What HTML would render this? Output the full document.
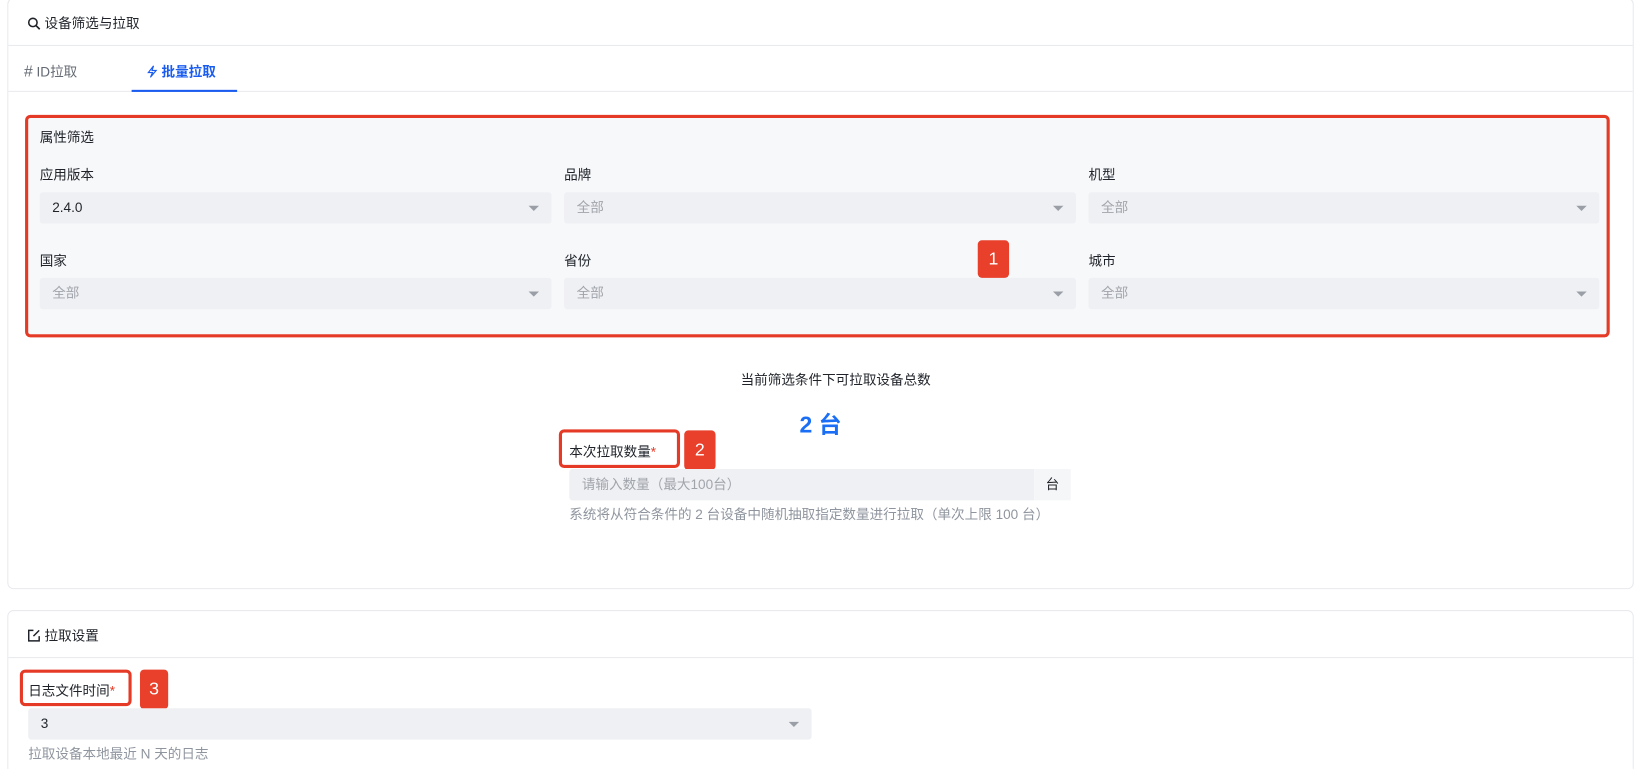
<!DOCTYPE html>
<html style="width:1636px;height:769px;overflow:hidden"><head><meta charset="utf-8"><style>
*{box-sizing:border-box;margin:0;padding:0}
body{width:1636px;height:769px;background:#fff;font-family:"Liberation Sans","Noto Sans CJK SC",sans-serif;font-size:13px;color:#1f2329;position:relative;overflow:hidden}
#w{position:absolute;left:0;top:0;width:1566px;height:736px;overflow:hidden;transform:scale(1.0446);transform-origin:0 0}
.a{position:absolute}
.card{position:absolute;left:7px;width:1557px;border:1px solid #e8eaee;border-radius:6px;background:#fff}
.sel{position:absolute;height:30px;background:#eff0f3;border-radius:3px;padding-left:12px;line-height:30px;font-size:13px;color:#a0a4ab}
.sel.d:after{content:"";position:absolute;right:12px;top:13px;border-left:5px solid transparent;border-right:5px solid transparent;border-top:5px solid #9a9ea6}
.lbl{position:absolute;font-size:13px;color:#1f2329}
.badge{position:absolute;background:#e8402a;color:#fff;border-radius:4px;text-align:center;font-size:17px}
.rb{position:absolute;border:3px solid #e53a26;border-radius:5px}
</style></head><body><div id="w">
<div class="card" style="top:-2px;height:566px"></div>
<div class="a" style="left:26px;top:12px;font-size:13px"><svg width="13" height="13" viewBox="0 0 13 13" style="vertical-align:-2px"><circle cx="5.5" cy="5.5" r="4" fill="none" stroke="#1f2329" stroke-width="1.5"/><path d="M8.5 8.5L12 12" stroke="#1f2329" stroke-width="1.6"/></svg> 设备筛选与拉取</div>
<div class="a" style="left:8px;top:43px;width:1555px;height:1px;background:#e8eaee"></div>
<div class="a" style="left:23px;top:58px;color:#646a73"><span style="font-size:15px">#</span> ID拉取</div>
<div class="a" style="left:140px;top:58px;color:#1a5cf0;font-weight:bold"><svg width="11" height="13" viewBox="0 0 11 13" style="vertical-align:-2px"><path d="M7 1L2 7.5H6L4 12L9.5 5.5H5.5L7 1Z" fill="none" stroke="#1a5cf0" stroke-width="1.1"/></svg> 批量拉取</div>
<div class="a" style="left:8px;top:87px;width:1555px;height:1px;background:#e8eaee"></div>
<div class="a" style="left:126px;top:86px;width:101px;height:2px;background:#1a5cf0"></div>
<div class="a" style="left:24px;top:110px;width:1517px;height:213px;background:#f7f8fa;border:3px solid #e53a26;border-radius:5px"></div>
<div class="lbl" style="left:38px;top:121px">属性筛选</div>
<div class="lbl" style="left:38px;top:157px">应用版本</div>
<div class="lbl" style="left:540px;top:157px">品牌</div>
<div class="lbl" style="left:1042px;top:157px">机型</div>
<div class="sel d" style="left:38px;top:184px;width:490px;color:#1f2329">2.4.0</div>
<div class="sel d" style="left:540px;top:184px;width:490px">全部</div>
<div class="sel d" style="left:1042px;top:184px;width:489px">全部</div>
<div class="lbl" style="left:38px;top:239px">国家</div>
<div class="lbl" style="left:540px;top:239px">省份</div>
<div class="lbl" style="left:1042px;top:239px">城市</div>
<div class="sel d" style="left:38px;top:266px;width:490px">全部</div>
<div class="sel d" style="left:540px;top:266px;width:490px">全部</div>
<div class="sel d" style="left:1042px;top:266px;width:489px">全部</div>
<div class="badge" style="left:936px;top:230px;width:30px;height:36px;line-height:36px">1</div>
<div class="a" style="left:0;width:1600px;top:353px;text-align:center;font-size:13px;color:#1f2329">当前筛选条件下可拉取设备总数</div>
<div class="a" style="left:0;width:1571px;top:389px;text-align:center;font-size:22px;font-weight:bold;color:#1a6ef5">2 台</div>
<div class="rb" style="left:535px;top:411px;width:116px;height:37px"></div>
<div class="lbl" style="left:545px;top:422px">本次拉取数量<span style="color:#e53a26">*</span></div>
<div class="badge" style="left:655px;top:412px;width:30px;height:38px;line-height:38px">2</div>
<div class="sel" style="left:545px;top:449px;width:445px;border-radius:3px 0 0 3px">请输入数量（最大100台）</div>
<div class="a" style="left:990px;top:449px;width:35px;height:30px;background:#f5f6f8;line-height:30px;text-align:center;color:#1f2329">台</div>
<div class="a" style="left:545px;top:482px;color:#8f959e">系统将从符合条件的 2 台设备中随机抽取指定数量进行拉取（单次上限 100 台）</div>
<div class="card" style="top:584px;height:200px"></div>
<div class="a" style="left:26px;top:598px"><svg width="13" height="13" viewBox="0 0 13 13" style="vertical-align:-2px"><path d="M6 1.5H1.5V11.5H11.5V7" fill="none" stroke="#1f2329" stroke-width="1.4"/><path d="M6 7L11.5 1.5" stroke="#1f2329" stroke-width="1.4"/></svg> 拉取设置</div>
<div class="a" style="left:8px;top:629px;width:1555px;height:1px;background:#e8eaee"></div>
<div class="rb" style="left:19px;top:641px;width:107px;height:35px"></div>
<div class="lbl" style="left:27px;top:651px">日志文件时间<span style="color:#e53a26">*</span></div>
<div class="badge" style="left:134px;top:641px;width:27px;height:38px;line-height:38px">3</div>
<div class="sel d" style="left:27px;top:678px;width:750px;color:#1f2329">3</div>
<div class="a" style="left:27px;top:711px;color:#8f959e">拉取设备本地最近 N 天的日志</div>
</div></body></html>
